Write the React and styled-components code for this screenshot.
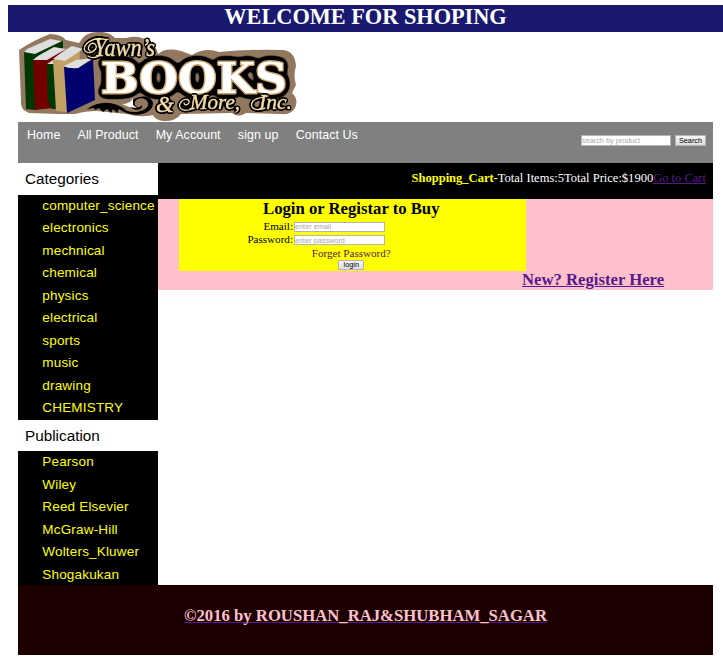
import React from "react";
import styled, { createGlobalStyle } from "styled-components";

const GlobalStyle = createGlobalStyle`
  * { box-sizing: border-box; }
  body { margin: 0; background: #fff; font-family: "Liberation Serif", serif; color: #000; }
`;

const Page = styled.div`
  width: 723px;
  height: 663px;
  padding: 5px 0 0 8px;
  overflow: hidden;
`;

const Banner = styled.h1`
  margin: 0;
  height: 27px;
  background: #191970;
  color: #fff;
  text-align: center;
  font-size: 22.3px;
  line-height: 24px;
  white-space: nowrap;
`;

const Shell = styled.div`
  width: 695px;
  margin-left: 10px;
`;

const LogoImage = styled.svg`
  display: block;
  width: 280px;
  height: 90px;
`;

const Navbar = styled.nav`
  display: flex;
  justify-content: space-between;
  height: 41px;
  padding: 0 7px 0 9px;
  background: #808080;
`;

const Menu = styled.ul`
  display: flex;
  gap: 17.2px;
  margin: 0;
  padding: 0;
  list-style: none;
`;

const MenuItem = styled.li`
  color: #fff;
  font: 12.4px/27px "Liberation Sans", sans-serif;
  letter-spacing: 0.09px;
  white-space: nowrap;
`;

const SearchForm = styled.div`
  display: flex;
  gap: 4px;
  padding-top: 13px;
`;

const Field = styled.input`
  width: ${(p) => p.$width || 90}px;
  height: ${(p) => p.$height || 11}px;
  padding: 0;
  border: 1px solid #b5b5b5;
  border-radius: 0;
  background: #fff;
  font: 7.3px "Liberation Sans", sans-serif;
  &::placeholder { color: #a9a9a9; opacity: 1; }
`;

const Button = styled.button`
  width: ${(p) => p.$width}px;
  height: ${(p) => p.$height || 11}px;
  padding: 0;
  border: 1px solid #b4b4b4;
  border-radius: ${(p) => p.$radius || 0}px;
  background: linear-gradient(#f6f6f6, #dedede);
  color: #000;
  font: 7.3px/8px "Liberation Sans", sans-serif;
`;

const Columns = styled.div`
  display: flex;
  height: 422px;
`;

const Sidebar = styled.aside`
  width: 140px;
  height: 422px;
  background: #000;
  font-family: "Liberation Sans", sans-serif;
`;

const SideTitle = styled.h2`
  margin: 0;
  height: 31.5px;
  padding-left: 7px;
  background: #fff;
  font-size: 15.3px;
  font-weight: 400;
  line-height: 31px;
`;

const SideList = styled.ul`
  margin: 0;
  height: ${(p) => p.$height}px;
  padding: 0 0 0 24.3px;
  list-style: none;
`;

const SideItem = styled.li`
  height: 22.55px;
  color: #ff0;
  font-size: 13.5px;
  letter-spacing: 0.18px;
  line-height: 22.3px;
  white-space: nowrap;
`;

const Content = styled.main`
  width: 555px;
`;

const CartBar = styled.div`
  height: 35.5px;
  padding-right: 7px;
  background: #000;
  color: #fff;
  font-size: 12.52px;
  line-height: 30px;
  text-align: right;
  white-space: nowrap;
`;

const CartTitle = styled.b`
  color: #ff0;
`;

const CartLink = styled.a`
  color: #551a8b;
  text-decoration: underline;
`;

const ProductArea = styled.section`
  height: 91px;
  padding-left: 21px;
  background: #ffc0cb;
`;

const LoginPanel = styled.div`
  display: flex;
  flex-direction: column;
  align-items: center;
  width: 346.5px;
  height: 72.5px;
  padding-right: 2px;
  background: #ff0;
`;

const LoginTitle = styled.h2`
  margin: 0;
  font-size: 16.7px;
  line-height: 20px;
  height: 21px;
  white-space: nowrap;
`;

const LoginRow = styled.label`
  display: grid;
  grid-template-columns: 114px 91px;
  column-gap: 1px;
  align-self: flex-start;
  height: 13.5px;
  font-size: 11.1px;
  line-height: 12.5px;
  text-align: right;
`;

const FieldSlot = styled.span`
  display: flex;
  padding-top: 2px;
`;

const Forgot = styled.a`
  height: 13px;
  color: #551a4b;
  font-size: 11.1px;
  line-height: 12px;
`;

const Register = styled.a`
  display: block;
  width: max-content;
  margin-left: 343px;
  color: #551a8b;
  font-size: 16.7px;
  font-weight: 700;
  line-height: 18px;
  text-decoration: underline;
`;

const Footer = styled.footer`
  height: 70px;
  background: #1c0000;
  text-align: center;
  line-height: 61px;
`;

const FooterLink = styled.a`
  color: #551a8b;
  font-size: 16.7px;
  font-weight: 700;
  text-decoration: underline;
  text-decoration-skip-ink: none;
`;

const FooterText = styled.span`
  color: #ffc0cb;
`;

const Lettering = styled.text`
  font-family: "DejaVu Serif", serif;
  font-size: 43px;
  font-weight: 700;
  fill: #fff;
  stroke: #cda56a;
  stroke-width: 2.8px;
  stroke-linejoin: round;
  paint-order: stroke;
`;

const Script = styled.text`
  font-family: "Liberation Serif", serif;
  font-style: italic;
  font-weight: 400;
  font-size: ${(p) => p.$size}px;
  fill: #f4dda5;
  stroke: #f4dda5;
  stroke-width: 0.4px;
`;

const Flourish = styled.path`
  fill: none;
  stroke: #f4dda5;
  stroke-width: 1.3px;
  stroke-linecap: round;
`;

function OutlineFilter({ id, radius }) {
  return (
    <filter id={id} x="0" y="0" width="280" height="90" filterUnits="userSpaceOnUse" colorInterpolationFilters="sRGB">
      <feGaussianBlur in="SourceAlpha" stdDeviation={radius} result="soft" />
      <feComponentTransfer in="soft" result="wide">
        <feFuncA type="linear" slope="14" intercept="-0.9" />
      </feComponentTransfer>
      <feMerge>
        <feMergeNode in="wide" />
        <feMergeNode in="SourceGraphic" />
      </feMerge>
    </filter>
  );
}

function Logo() {
  return (
    <LogoImage viewBox="0 0 280 90" role="img" aria-label="Yawn's Books &amp; More, Inc.">
      <defs>
        <OutlineFilter id="heavy-outline" radius={3.9} />
        <OutlineFilter id="fine-outline" radius={1.5} />
      </defs>
      <path fill="#92785f" d="M1 18 Q16 8 32 2 Q43 2 48 8 L61 11 Q67 0 79 0 Q91 -1 97 6 L108 6 Q126 2 130 12 Q139 14 140 22 Q148 15 163 19 L174 23 Q187 15 201 20 Q230 17 265 18 Q277 19 278 34 Q275 44 278 53 L274 61 Q281 67 277 76 Q273 83 263 82 L228 81 Q220 86 214 81 L163 82 Q157 90 145 89 Q137 88 135 83 Q122 86 109 82 L79 79 Q67 79 57 82 L41 82 11 81 Q2 78 3 69Z" />
      <path fill="#003600" d="M6 20 L31 8 45 9 45 25 17 78 8 77Z" />
      <path fill="#dedede" d="M6 20 L9 17 32 7 44 9 17 22Z" />
      <path fill="#720000" d="M15 29 L47 18 47 73 35 76 17 78Z" />
      <path fill="#dedede" d="M15 28 Q19 24 27 20 L36 15 48 17 29 28Z" />
      <path fill="#003600" d="M29 32 L37 30 40 77 34 77 30 70Z" />
      <path fill="#dedede" d="M29 32 L35 28 36 32Z" />
      <path fill="#c2a164" d="M35 28 L62 16 60 70 49 80 38 79Z" />
      <path fill="#dedede" d="M35 27 Q42 21 54 14 L65 17 47 29Z" />
      <path d="M69 77 C82 68 97 69 109 79 C124 83 135 74 128 68 C122 63 112 70 119 75 Q122 76 124 73 C125 81 110 78 111 71 C115 65 132 60 135 71 C135 83 114 87 101 77 L99 81 95 77 93 81 89 77 85 80 81 76 77 78 76 76Z" />
      <path fill="#fff" d="M104 72 Q112 72 115 66 L115 73 119 76 111 75Z" />
      <g filter="url(#heavy-outline)">
        <Lettering x="83" y="60.5" textLength="186" lengthAdjust="spacingAndGlyphs">BOOKS</Lettering>
      </g>
      <path fill="#00006e" d="M46 35 L60 36 75 27 77 68 49 81Z" />
      <path fill="#dedede" d="M46 34 L58 28 75 26 60 36Q51 37 46 34Z" />
      <g filter="url(#fine-outline)">
        <Script x="76" y="24" $size={25} textLength="61" lengthAdjust="spacingAndGlyphs">Yawn’s</Script>
        <Flourish d="M88 8 C76 3 63 13 67 19 C72 24 82 16 77 12 C73 9 68 16 72 19M83 22 Q77 28 70 24" />
      </g>
      <g filter="url(#fine-outline)">
        <Script x="138" y="80" $size={23} textLength="18" lengthAdjust="spacingAndGlyphs">&amp;</Script>
        <Script x="172" y="77" $size={20} textLength="50" lengthAdjust="spacingAndGlyphs">More,</Script>
        <Script x="241" y="77" $size={21} textLength="33" lengthAdjust="spacingAndGlyphs">Inc.</Script>
        <Flourish d="M176 76 C167 81 158 77 163 70 C167 65 174 68 170 72 Q167 74 166 71M247 76 C238 80 230 76 235 69 C239 65 245 66 250 64" />
      </g>
    </LogoImage>
  );
}

const MENU = ["Home", "All Product", "My Account", "sign up", "Contact Us"];
const CATEGORIES = ["computer_science", "electronics", "mechnical", "chemical", "physics", "electrical", "sports", "music", "drawing", "CHEMISTRY"];
const PUBLISHERS = ["Pearson", "Wiley", "Reed Elsevier", "McGraw-Hill", "Wolters_Kluwer", "Shogakukan"];

function SideSection({ title, items, height }) {
  return (
    <>
      <SideTitle>{title}</SideTitle>
      <SideList $height={height}>
        {items.map((item) => <SideItem key={item}>{item}</SideItem>)}
      </SideList>
    </>
  );
}

export default function App() {
  return (
    <Page>
      <GlobalStyle />
      <Banner>WELCOME FOR SHOPING</Banner>
      <Shell>
        <Logo />
        <Navbar>
          <Menu>{MENU.map((item) => <MenuItem key={item}>{item}</MenuItem>)}</Menu>
          <SearchForm>
            <Field placeholder="search by product" />
            <Button $width={31}>Search</Button>
          </SearchForm>
        </Navbar>
        <Columns>
          <Sidebar>
            <SideSection title="Categories" items={CATEGORIES} height={225} />
            <SideSection title="Publication" items={PUBLISHERS} height={134} />
          </Sidebar>
          <Content>
            <CartBar>
              <CartTitle>Shopping_Cart-</CartTitle>Total Items:5Total Price:$1900<CartLink>Go to Cart</CartLink>
            </CartBar>
            <ProductArea>
              <LoginPanel>
                <LoginTitle>Login or Registar to Buy</LoginTitle>
                <LoginRow>Email:<FieldSlot><Field placeholder="enter email" $width={91} $height={10} /></FieldSlot></LoginRow>
                <LoginRow>Password:<FieldSlot><Field type="password" placeholder="enter password" $width={91} $height={10} /></FieldSlot></LoginRow>
                <Forgot>Forget Password?</Forgot>
                <Button $width={26} $height={10} $radius={1}>login</Button>
              </LoginPanel>
              <Register>New? Register Here</Register>
            </ProductArea>
          </Content>
        </Columns>
        <Footer>
          <FooterLink><FooterText>©2016 by ROUSHAN_RAJ&amp;SHUBHAM_SAGAR</FooterText></FooterLink>
        </Footer>
      </Shell>
    </Page>
  );
}
